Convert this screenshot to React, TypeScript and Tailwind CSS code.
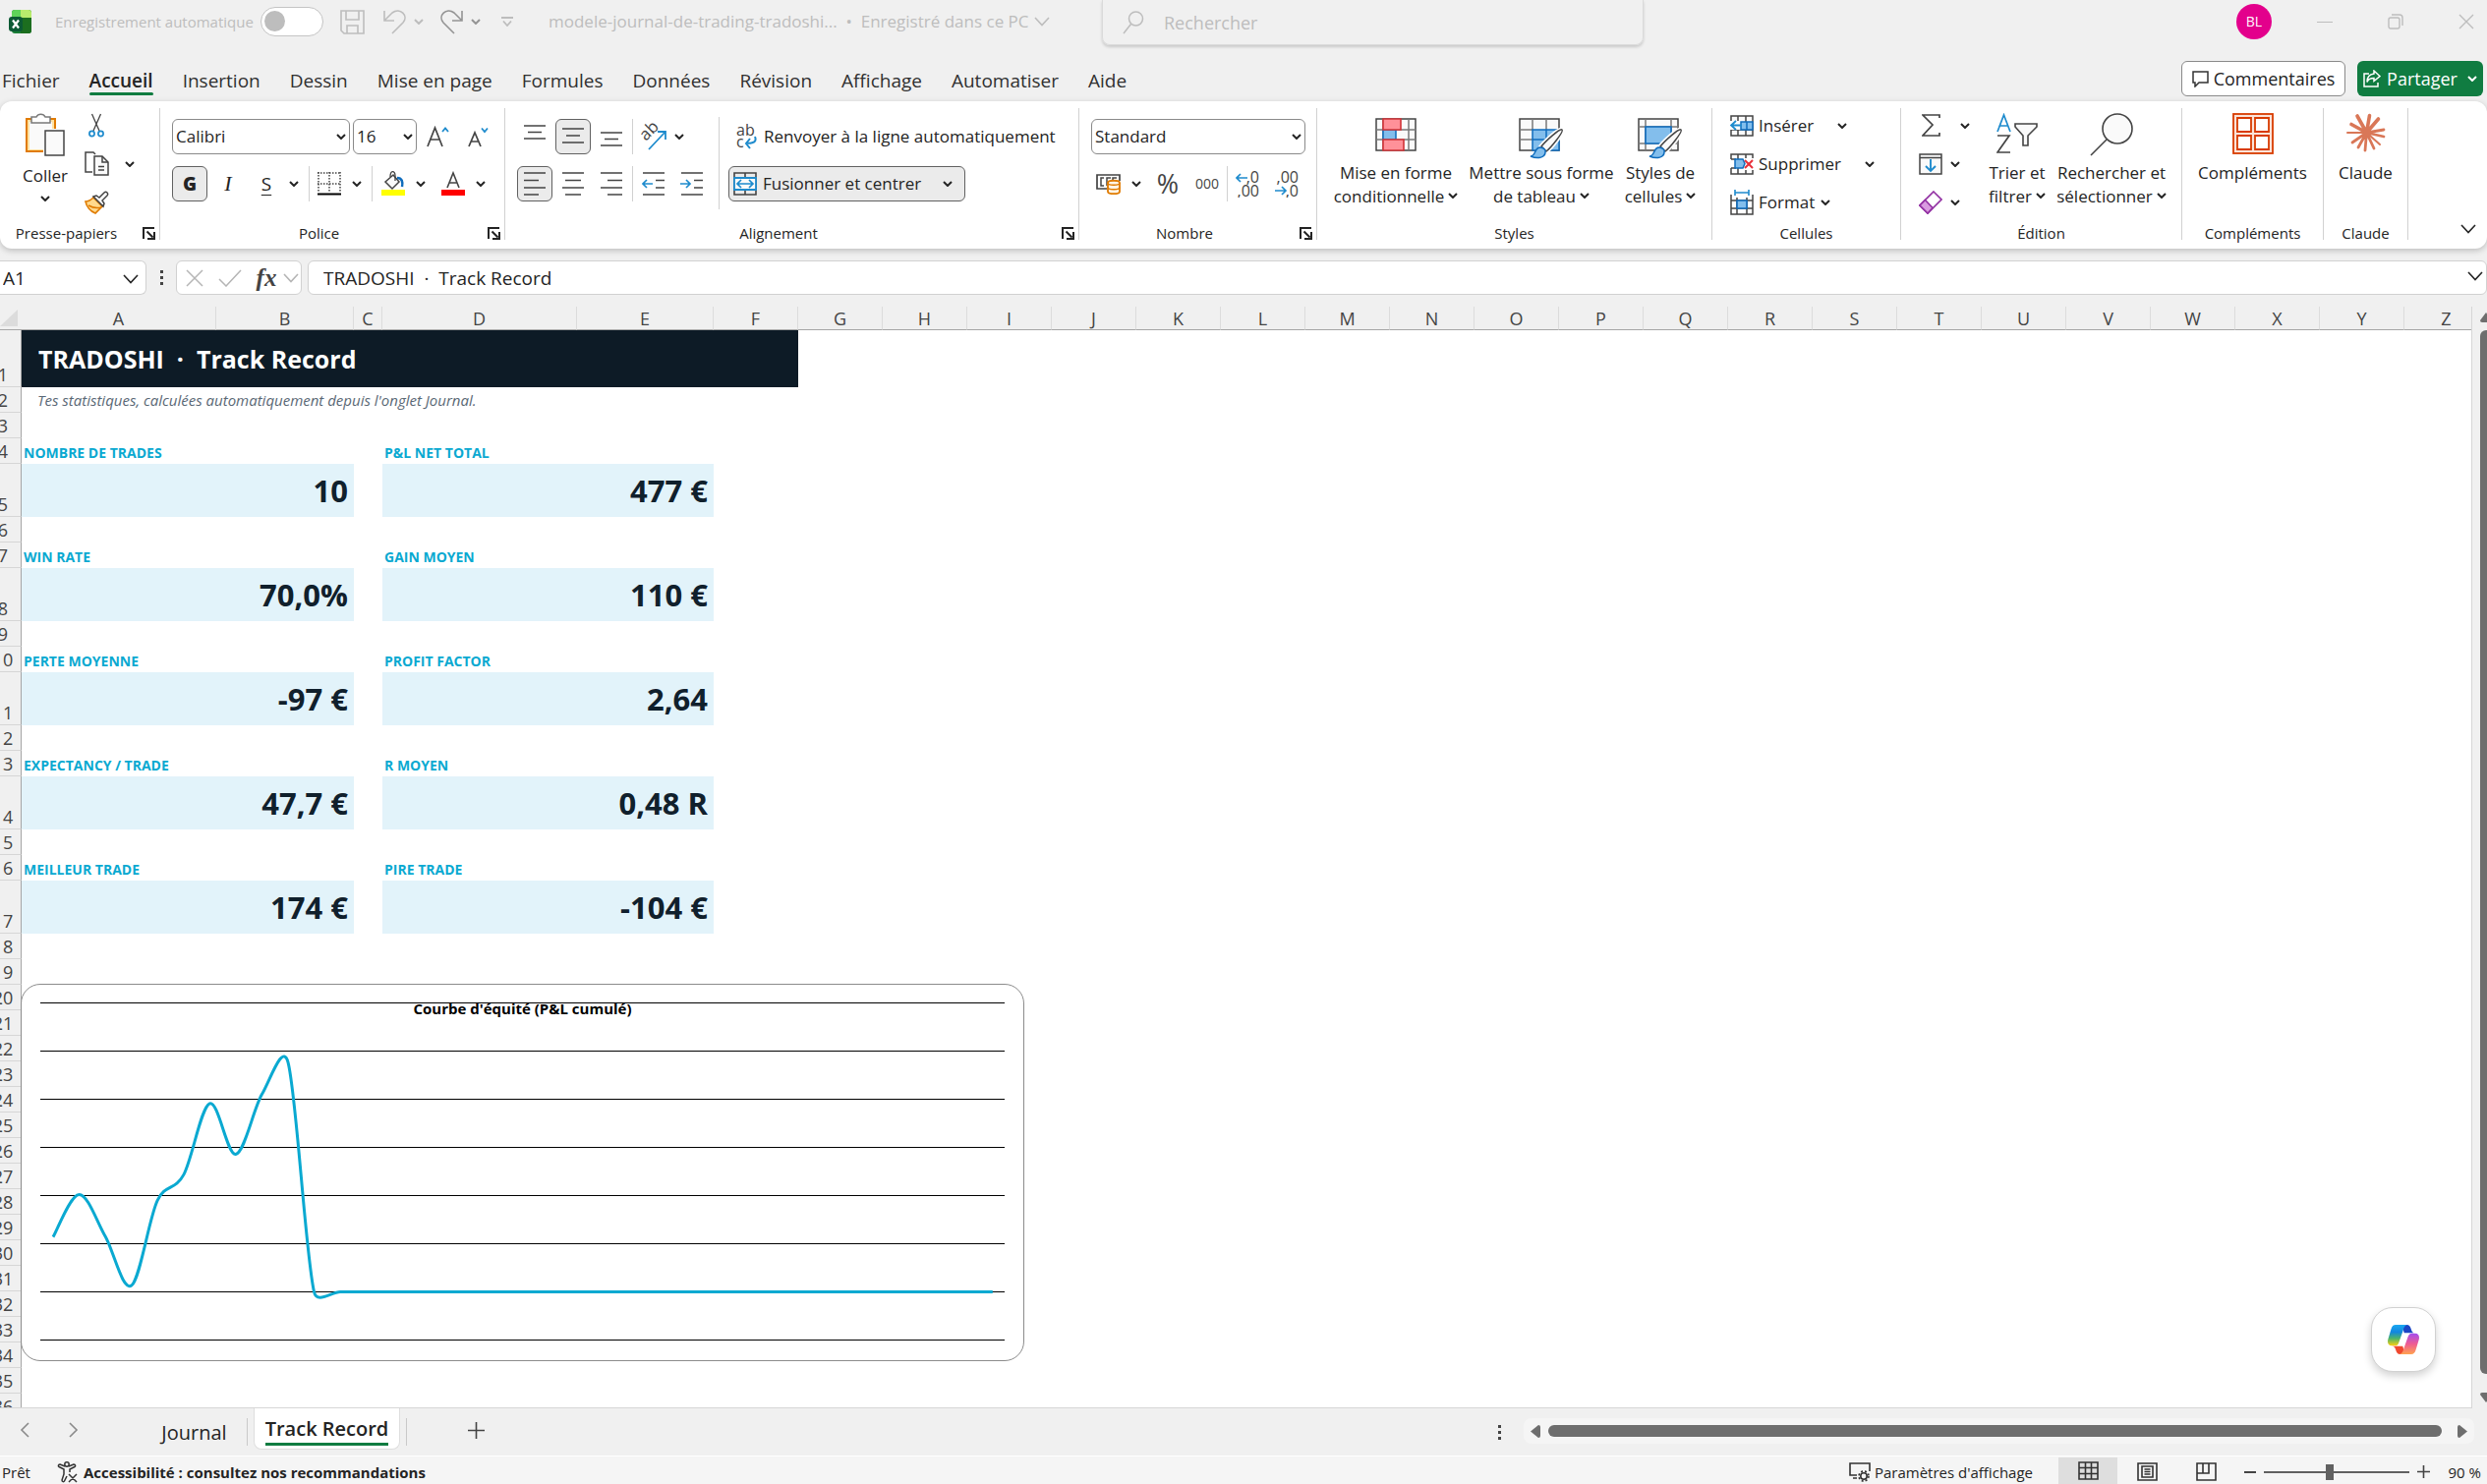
import React from "react";

type Kpi = { label: string; value: string };

const MENU = [
  "Fichier",
  "Accueil",
  "Insertion",
  "Dessin",
  "Mise en page",
  "Formules",
  "Données",
  "Révision",
  "Affichage",
  "Automatiser",
  "Aide",
];

const COLUMNS = "ABCDEFGHIJKLMNOPQRSTUVWXYZ".split("");
const COLUMN_WIDTHS: Record<string, number> = { A: 198, B: 140, C: 29, D: 198, E: 139 };

const KPIS: [Kpi, Kpi][] = [
  [
    { label: "NOMBRE DE TRADES", value: "10" },
    { label: "P&L NET TOTAL", value: "477 €" },
  ],
  [
    { label: "WIN RATE", value: "70,0%" },
    { label: "GAIN MOYEN", value: "110 €" },
  ],
  [
    { label: "PERTE MOYENNE", value: "-97 €" },
    { label: "PROFIT FACTOR", value: "2,64" },
  ],
  [
    { label: "EXPECTANCY / TRADE", value: "47,7 €" },
    { label: "R MOYEN", value: "0,48 R" },
  ],
  [
    { label: "MEILLEUR TRADE", value: "174 €" },
    { label: "PIRE TRADE", value: "-104 €" },
  ],
];

// cumulative P&L, the unused journal rows stay at zero
const EQUITY = [114, 202, 115, 13, 190, 243, 391, 286, 410, 477, ...Array(27).fill(0)];

// smoothed line: control handles never reach past half of the segment
function smoothPath(values: number[]) {
  const pts = values.map((v, i) => [32 + i * 26.55, 312.5 - v * 0.49]);
  const handle = (i: number, dir: number, half: number) => {
    const prev = pts[Math.max(i - 1, 0)];
    const next = pts[Math.min(i + 1, pts.length - 1)];
    const dx = next[0] - prev[0];
    const dy = next[1] - prev[1];
    const len = Math.hypot(dx, dy);
    const k = (Math.min(len / 6, half) / len) * dir;
    return `${(pts[i][0] + dx * k).toFixed(1)} ${(pts[i][1] + dy * k).toFixed(1)}`;
  };
  let d = `M${pts[0][0]} ${pts[0][1]}`;
  for (let i = 0; i < pts.length - 1; i++) {
    const half = Math.hypot(pts[i + 1][0] - pts[i][0], pts[i + 1][1] - pts[i][1]) / 2;
    d += ` C${handle(i, 1, half)} ${handle(i + 1, -1, half)} ${pts[i + 1][0].toFixed(1)} ${pts[i + 1][1].toFixed(1)}`;
  }
  return d;
}

/* ---------- small pieces ---------- */

const Chevron = ({ className = "" }: { className?: string }) => (
  <svg width="10" height="6" viewBox="0 0 10 6" fill="none" stroke="currentColor" strokeWidth="2" className={`inline-block shrink-0 ${className}`}>
    <path d="M1 1l4 4 4-4" />
  </svg>
);

const WideChevron = ({ className = "" }: { className?: string }) => (
  <svg width="16" height="10" viewBox="0 0 16 10" fill="none" stroke="currentColor" strokeWidth="1.6" className={`shrink-0 ${className}`}>
    <path d="M1 1l7 7.500 7-7.500" />
  </svg>
);

interface ToolProps {
  label: string;
  active?: boolean;
  className?: string;
  children: React.ReactNode;
}

const Tool: React.FC<ToolProps> = ({ label, active, className = "w-9", children }) => (
  <button
    aria-label={label}
    className={`h-9 shrink-0 flex items-center justify-center rounded-md border ${
      active ? "bg-[#ebebeb] border-[#616161]" : "border-transparent"
    } ${className}`}
  >
    {children}
  </button>
);

const More = ({ label, className = "w-5" }: { label: string; className?: string }) => (
  <button aria-label={label} className={`h-9 shrink-0 flex items-center justify-center ${className}`}>
    <Chevron />
  </button>
);

const Separator = () => <div className="w-px h-9 bg-[#d1d1d1] shrink-0" />;

interface GroupProps {
  title: string;
  className: string;
  launcher?: boolean;
  children: React.ReactNode;
}

const Group: React.FC<GroupProps> = ({ title, className, launcher, children }) => (
  <section className={`h-[134px] shrink-0 flex flex-col border-r border-[#d1d1d1] ${className}`}>
    <div className="flex-1 min-h-0">{children}</div>
    <div className="h-3.5 flex items-center">
      <span className={`flex-1 text-center text-[15px] leading-3.5 whitespace-nowrap ${launcher ? "pr-2.5" : ""}`}>{title}</span>
      {launcher && (
        <button aria-label={`Paramètres ${title}`} className="mr-1 shrink-0">
          <svg width="13" height="13" viewBox="0 0 13 13" fill="none" stroke="#242424" strokeWidth="2">
            <path d="M1 12V1h11M4.500 4.500l6 6M12 5v7H5" />
          </svg>
        </button>
      )}
    </div>
  </section>
);

interface ComboProps {
  id: string;
  label: string;
  value: string;
  className: string;
}

const Combo: React.FC<ComboProps> = ({ id, label, value, className }) => (
  <div className={`relative ${className}`}>
    <label htmlFor={id} className="sr-only">
      {label}
    </label>
    <select id={id} className="w-full h-9 appearance-none rounded-md border border-[#8a8a8a] bg-white pl-[3px] text-[17px] leading-6">
      <option>{value}</option>
    </select>
    <Chevron className="absolute right-1 top-[15px] pointer-events-none" />
  </div>
);

interface BigButtonProps {
  lines: string[];
  menu?: boolean;
  className: string;
  children: React.ReactNode;
}

const BigButton: React.FC<BigButtonProps> = ({ lines, menu, className, children }) => (
  <button className={`shrink-0 flex flex-col items-center text-[17px] leading-6 whitespace-nowrap ${className}`}>
    <span className="h-[54px] flex items-start justify-center pt-[5px]">{children}</span>
    {lines.map((line, i) => (
      <span key={line}>
        {line}
        {menu && i === lines.length - 1 && <Chevron className="ml-1 mb-1" />}
      </span>
    ))}
  </button>
);

/* ---------- icons ---------- */

const ExcelLogo = () => (
  <svg width="24" height="26" viewBox="0 0 24 26" className="shrink-0">
    <rect x="3" y="1" width="20" height="24" rx="3" fill="#1a7f37" />
    <path d="M3 9V4a3 3 0 0 1 3-3h7v8z" fill="#5fd35a" />
    <path d="M12 1h8a3 3 0 0 1 3 3v5H12z" fill="#b8ec6c" />
    <path d="M12 9h11v13a3 3 0 0 1-3 3h-8z" fill="#1c6e1f" />
    <rect x="0" y="8" width="14" height="15" rx="3" fill="#0c5a34" />
    <path d="M4 11.500l6 8M10 11.500l-6 8" stroke="#fff" strokeWidth="2.200" />
  </svg>
);

const PasteIcon = () => (
  <svg width="42" height="46" viewBox="0 0 42 46" fill="none">
    <path d="M2 7h29v33H2z" fill="#ffe1a1" stroke="#e07b00" strokeWidth="2" />
    <path d="M5 10h23v28H5z" fill="#fafafa" />
    <path d="M7 11V5h5a5 5 0 0 1 9 0h5v6z" fill="#fff" stroke="#7a7a7a" strokeWidth="1.500" />
    <rect x="19" y="17" width="23" height="29" fill="#fff" />
    <rect x="21" y="19" width="19" height="25" fill="#fafafa" stroke="#444" strokeWidth="1.500" />
  </svg>
);

const CutIcon = () => (
  <svg width="16" height="25" viewBox="0 0 16 25" fill="none">
    <path d="M3.500 1L11 18M12.500 1L5 18" stroke="#444" strokeWidth="1.300" />
    <circle cx="3.500" cy="21" r="2.600" stroke="#1e8bcd" strokeWidth="1.700" />
    <circle cx="12.500" cy="21" r="2.600" stroke="#1e8bcd" strokeWidth="1.700" />
  </svg>
);

const CopyIcon = () => (
  <svg width="25" height="25" viewBox="0 0 25 25" fill="none" stroke="#444" strokeWidth="1.500">
    <path d="M8 21H1V1h8l2 2" />
    <path d="M10 5h8l6 6v13H10z" fill="#fafafa" />
    <path d="M18 5v6h6M14 15.500h6M14 19h6" />
  </svg>
);

const BrushIcon = () => (
  <svg width="25" height="24" viewBox="0 0 25 24" fill="none">
    <path d="M9 7C6 10 4 11 1 11c1 5 5 10 10 12l7-7z" fill="#ffd98c" stroke="#e07b00" strokeWidth="1.600" />
    <path d="M4 15c5 3 9 3 13 2" stroke="#e07b00" strokeWidth="1.500" />
    <path d="M9 6l3-1 3 2 5-5c2-2 5 1 3 3l-5 5 2 3-1 3z" fill="#fff" stroke="#444" strokeWidth="1.500" />
  </svg>
);

const BordersIcon = () => (
  <svg width="24" height="24" viewBox="0 0 24 24" fill="none" stroke="#444">
    <path d="M0 1h24M0 12h24" strokeWidth="1.500" strokeDasharray="1.500 1.500" />
    <path d="M1 0v21M12 0v21M23 0v21" strokeWidth="1.500" strokeDasharray="1.500 1.500" />
    <path d="M0 22.500h24" stroke="#000" strokeWidth="2" />
  </svg>
);

const FillIcon = () => (
  <svg width="24" height="26" viewBox="0 0 24 26" fill="none">
    <path d="M4 11l8-7 6 7-7 7z" fill="#fafafa" stroke="#444" strokeWidth="1.500" />
    <path d="M9 6c0-7 5-7 5-1v5" stroke="#444" strokeWidth="1.300" />
    <path d="M16 7c5 0 6 4 5 9" stroke="#0f6cbd" strokeWidth="2.500" />
    <path d="M0 19h24v6H0z" fill="#ff0" />
  </svg>
);

const FontColorIcon = () => (
  <svg width="24" height="26" viewBox="0 0 24 26" fill="none">
    <path d="M6 17l6-15 6 15M8 12h8" stroke="#444" strokeWidth="1.600" />
    <path d="M0 19h24v6H0z" fill="#f00" />
  </svg>
);

const FontSizeIcon = ({ up }: { up?: boolean }) => (
  <svg width="24" height="22" viewBox="0 0 24 22" fill="none">
    <path d={up ? "M1 21L8.500 2 16 21M4 14h9" : "M3 21L9 7l6 14M5.500 16h7"} stroke="#444" strokeWidth="1.700" />
    <path d={up ? "M16 6l3-3.500L22 6" : "M16 2.500L19 6l3-3.500"} stroke="#1e8bcd" strokeWidth="1.800" />
  </svg>
);

const LINE_SHAPES = {
  top: "M1 2h22M5 8.500h14M1 15h22",
  middle: "M1 5h22M5 12h14M1 19h22",
  bottom: "M1 9h22M5 15.500h14M1 22h22",
  left: "M1 2h22M1 9.500h15M1 17h22M1 24h15",
  center: "M1 2h22M4 9.500h16M1 17h22M4 24h16",
  right: "M1 2h22M8 9.500h15M1 17h22M8 24h15",
};

const LinesIcon = ({ kind }: { kind: keyof typeof LINE_SHAPES }) => (
  <svg width="24" height="26" viewBox="0 0 24 26" stroke="#444" strokeWidth="1.700">
    <path d={LINE_SHAPES[kind]} />
  </svg>
);

const IndentIcon = ({ more }: { more?: boolean }) => (
  <svg width="24" height="26" viewBox="0 0 24 26" fill="none" stroke="#444" strokeWidth="1.700">
    <path d="M1 2h22M14 9.500h9M14 17h9M1 24h22" />
    <path d={more ? "M0 13h10M6 9l4 4-4 4" : "M11 13H1M5 9l-4 4 4 4"} stroke="#1e8bcd" />
  </svg>
);

const OrientationIcon = () => (
  <svg width="28" height="28" viewBox="0 0 28 28" fill="none">
    <text x="0" y="0" transform="translate(6 19) rotate(-45)" fontSize="17" fill="#444">
      ab
    </text>
    <path d="M9 27L25 10M18 9h8v8" stroke="#1e8bcd" strokeWidth="1.800" />
  </svg>
);

const WrapIcon = () => (
  <svg width="22" height="26" viewBox="0 0 22 26" fill="none">
    <text x="0" y="12" fontSize="16" fill="#444">
      ab
    </text>
    <text x="0" y="24" fontSize="16" fill="#444">
      c
    </text>
    <path d="M19 13c2 5-1 7-9 7M14 15l-4 5 4 5" stroke="#1e8bcd" strokeWidth="2" />
  </svg>
);

const MergeIcon = () => (
  <svg width="24" height="24" viewBox="0 0 24 24" fill="none">
    <path d="M1 1h22v22H1zM12 1v4M12 19v4" stroke="#444" strokeWidth="1.600" />
    <path d="M1 6h22v12H1z" fill="#fafafa" stroke="#1e8bcd" strokeWidth="1.800" />
    <path d="M4 12h16M8 8l-4 4 4 4M16 8l4 4-4 4" stroke="#1e8bcd" strokeWidth="1.700" />
  </svg>
);

const MoneyIcon = () => (
  <svg width="26" height="22" viewBox="0 0 26 22" fill="none">
    <path d="M24 8V2H1v14h10" stroke="#444" strokeWidth="1.700" />
    <path d="M8 5H5v8h3M15 5h-4v8M17 8V5h4" stroke="#444" strokeWidth="1.500" />
    <path d="M12 10c0-3 12-3 12 0v9c0 3-12 3-12 0z" fill="#fff5e5" stroke="#e07b00" strokeWidth="1.800" />
    <path d="M12 10c0 3 12 3 12 0M12 14.500c0 3 12 3 12 0" stroke="#e07b00" strokeWidth="1.500" />
  </svg>
);

const DecimalIcon = ({ more }: { more?: boolean }) => (
  <svg width="24" height="28" viewBox="0 0 24 28" fill="none">
    <text x="24" y="13" textAnchor="end" fontSize="16" fill="#444">
      {more ? ",0" : ",00"}
    </text>
    <text x="24" y="27" textAnchor="end" fontSize="16" fill="#444">
      {more ? ",00" : ",0"}
    </text>
    <path d={more ? "M12 8H1M5 4L1 8l4 4" : "M0 21h11M7 17l4 4-4 4"} stroke="#1e8bcd" strokeWidth="1.700" />
  </svg>
);

const CondFormatIcon = () => (
  <svg width="42" height="34" viewBox="0 0 42 34" fill="#fafafa">
    <path d="M1 1h40v32H1z" stroke="#444" strokeWidth="1.500" />
    <path d="M1 12h40M1 22h40M8 1v32M34 1v32" stroke="#7a7a7a" strokeWidth="1.500" />
    <path d="M8 12h13v10H8z" fill="#83beec" stroke="#0f6cbd" strokeWidth="1.500" />
    <path d="M8 1h18v11H8zM8 22h21v11H8z" fill="#ff9199" stroke="#d13438" strokeWidth="1.600" />
  </svg>
);

const BrushOverlay = () => (
  <>
    <path d="M44 12c2 2-11 18-16 22l-5-5c4-5 19-19 21-17z" fill="#fff" stroke="#fff" strokeWidth="5" />
    <path d="M44 12c2 2-11 18-16 22l-5-5c4-5 19-19 21-17z" fill="#fafafa" stroke="#444" strokeWidth="1.500" />
    <path d="M27 33c1 8-8 9-15 6 5 0 4-8 9-9 3 0 5 1 6 3z" fill="#83beec" stroke="#0f6cbd" strokeWidth="1.500" />
  </>
);

const TableFormatIcon = () => (
  <svg width="46" height="42" viewBox="0 0 46 42" fill="none">
    <path d="M1 1h40v32H1z" fill="#fafafa" stroke="#444" strokeWidth="1.500" />
    <path d="M14 12h27v21H14z" fill="#83beec" />
    <path d="M1 12h13M1 22h13M14 1v11M28 1v11" stroke="#7a7a7a" strokeWidth="1.500" />
    <path d="M14 12h27v21H14zM14 22h27M28 12v21" stroke="#0f6cbd" strokeWidth="1.500" />
    <BrushOverlay />
  </svg>
);

const CellStylesIcon = () => (
  <svg width="46" height="42" viewBox="0 0 46 42" fill="none">
    <path d="M1 1h40v32H1z" fill="#fafafa" stroke="#444" strokeWidth="1.500" />
    <path d="M1 9h40M1 26h40M8 1v32M34 1v32" stroke="#7a7a7a" strokeWidth="1.500" />
    <path d="M8 9h26v17H8z" fill="#83beec" stroke="#0f6cbd" strokeWidth="1.600" />
    <BrushOverlay />
  </svg>
);

const InsertIcon = () => (
  <svg width="24" height="24" viewBox="0 0 24 24" fill="none">
    <path d="M1 2h22v20H1zM1 16h22M8 2v20M16 2v20" fill="#fafafa" stroke="#444" strokeWidth="1.500" />
    <path d="M0 7h14v9H0z" fill="#fff" />
    <path d="M11 8h12v8H11zM17 8v8" fill="#83beec" stroke="#0f6cbd" strokeWidth="1.500" />
    <path d="M12 11.500H1M6 7l-5 4.500L6 16" stroke="#1e8bcd" strokeWidth="1.800" />
  </svg>
);

const DeleteIcon = () => (
  <svg width="24" height="24" viewBox="0 0 24 24" fill="none">
    <path d="M1 7V2h22v4M1 16v6h22v-4M8 2v5M16 2v4M8 16v6M16 18v4M1 7h5M1 16h5" stroke="#444" strokeWidth="1.500" />
    <path d="M5 7h8l2 4.500-2 4.500H5z" fill="#83beec" stroke="#0f6cbd" strokeWidth="1.500" />
    <path d="M15 8l8 8M23 8l-8 8" stroke="#e8303a" strokeWidth="2" />
  </svg>
);

const FormatIcon = () => (
  <svg width="24" height="26" viewBox="0 0 24 26" fill="none">
    <path d="M1 5v20h22V5M1 11h22M1 19h22M7 8v17M17 8v17" stroke="#444" strokeWidth="1.500" />
    <path d="M7 11h10v8H7z" fill="#83beec" stroke="#0f6cbd" strokeWidth="1.600" />
    <path d="M5 3h14M5 0v6M19 0v6" stroke="#1e8bcd" strokeWidth="1.600" />
  </svg>
);

const SigmaIcon = () => (
  <svg width="19" height="23" viewBox="0 0 19 23" fill="none" stroke="#444" strokeWidth="1.700">
    <path d="M18 4V1H1l10 10L1 22h17v-3" />
  </svg>
);

const FillDownIcon = () => (
  <svg width="24" height="22" viewBox="0 0 24 22" fill="none">
    <path d="M1 1h22v20H1zM1 4.500h22" fill="#fafafa" stroke="#444" strokeWidth="1.500" />
    <path d="M12 6v12M7 13l5 5 5-5" stroke="#1e8bcd" strokeWidth="1.900" />
  </svg>
);

const EraserIcon = () => (
  <svg width="24" height="24" viewBox="0 0 24 24" fill="none" stroke="#9332a3" strokeWidth="1.700">
    <path d="M15 1l8 8L9 23l-8-8z" fill="#fff" />
    <path d="M6.500 9.500l7.500 8L9 23l-8-8z" fill="#d99be0" />
  </svg>
);

const SortIcon = () => (
  <svg width="42" height="41" viewBox="0 0 42 41" fill="none">
    <path d="M1 19L7.500 2 14 19M3.500 13h8" stroke="#1e8bcd" strokeWidth="1.700" />
    <path d="M1 23h12L1 40h13" stroke="#444" strokeWidth="1.700" />
    <path d="M19 11h22v3l-9 9v10h-5V23l-8-9z" fill="#fafafa" stroke="#444" strokeWidth="1.600" />
  </svg>
);

const FindIcon = () => (
  <svg width="44" height="44" viewBox="0 0 44 44" stroke="#444" strokeWidth="1.600">
    <circle cx="28" cy="16" r="15" fill="#fafafa" />
    <path d="M17 27L1 43" />
  </svg>
);

const AddinsIcon = () => (
  <svg width="42" height="42" viewBox="0 0 42 42" fill="#fff" stroke="#d83b01">
    <rect x="1" y="1" width="40" height="40" fill="#fbe3d9" strokeWidth="1.800" />
    <path d="M5 5h14v14H5zM23 5h14v14H23zM5 23h14v14H5zM23 23h14v14H23z" strokeWidth="1.800" />
  </svg>
);

const BurstIcon = () => (
  <svg width="40" height="40" viewBox="0 0 40 40" stroke="#d97757" strokeLinecap="round" fill="none">
    <path d="M20.500 20L11 3M20.500 20L23.500 2.500M20.500 20L32.500 6M20.500 20L5 11.500" strokeWidth="3.600" />
    <path d="M20.500 20L38 17M20.500 20L38 24M20.500 20L6 30M20.500 20L12 35M20.500 20L19 38M20.500 20L28 36" strokeWidth="2.800" />
    <path d="M20.500 20L34 32M20.500 20L1 20" strokeWidth="2" />
    <circle cx="21" cy="20" r="4" fill="#d97757" />
  </svg>
);

const CopilotIcon = () => (
  <svg width="32" height="30" viewBox="0 0 96 90">
    <defs>
      <linearGradient id="cool" x1="0" y1="0" x2="0" y2="1">
        <stop offset="0" stopColor="#1aa8f0" />
        <stop offset="0.350" stopColor="#1186e0" />
        <stop offset="0.650" stopColor="#4bb46a" />
        <stop offset="1" stopColor="#ffd00f" />
      </linearGradient>
      <linearGradient id="warm" x1="0" y1="1" x2="0" y2="0">
        <stop offset="0" stopColor="#a34df0" />
        <stop offset="0.500" stopColor="#ee5a93" />
        <stop offset="1" stopColor="#ffa350" />
      </linearGradient>
    </defs>
    <path d="M44 0h14c8 0 11 5 14 15 2 7 5 10 12 10H50z" fill="#1b45c4" />
    <path d="M24 0h38c-9 0-12 7-15 17L34 54c-3 8-6 10-12 10H12C2 64-2 56 1 44l9-30C13 4 17 0 24 0z" fill="url(#cool)" />
    <g transform="rotate(180 48 45)">
      <path d="M44 0h14c8 0 11 5 14 15 2 7 5 10 12 10H50z" fill="#f0482f" />
      <path d="M24 0h38c-9 0-12 7-15 17L34 54c-3 8-6 10-12 10H12C2 64-2 56 1 44l9-30C13 4 17 0 24 0z" fill="url(#warm)" />
    </g>
  </svg>
);

/* ---------- window parts ---------- */

const TitleBar = () => (
  <header className="h-[46px] flex items-start text-[#bdbdbd] text-[17px] leading-6 whitespace-nowrap">
    <div className="h-[44px] w-[1121px] shrink-0 flex items-center pl-[9px]">
      <ExcelLogo />
      <label htmlFor="autosave" className="ml-[23px] w-[209px] text-[15px]">
        Enregistrement automatique
      </label>
      <span className="relative w-16 h-[30px] shrink-0">
        <input
          id="autosave"
          type="checkbox"
          role="switch"
          className="peer appearance-none block w-16 h-[30px] rounded-full border border-[#c4c4c4] bg-white"
        />
        <span className="absolute left-1 top-1 w-[21px] h-[21px] rounded-full bg-[#bdbdbd] pointer-events-none" />
      </span>
      <button aria-label="Enregistrer" className="ml-[17px]">
        <svg width="25" height="25" viewBox="0 0 25 25" fill="none" stroke="currentColor" strokeWidth="1.600">
          <path d="M1 1h23v23H4l-3-3zM6 1v9h13V1M7 24v-8h11v8" />
        </svg>
      </button>
      <button aria-label="Annuler" className="ml-[19px] flex items-center gap-2">
        <svg width="23" height="25" viewBox="0 0 23 25" fill="none" stroke="currentColor" strokeWidth="1.600">
          <path d="M1 1v10h10M1 11L9 3c8-6 17 3 11 10L9 24" />
        </svg>
        <Chevron />
      </button>
      <button aria-label="Rétablir" className="ml-[17px] flex items-center gap-2 text-[#949494]">
        <svg width="23" height="25" viewBox="0 0 23 25" fill="none" stroke="currentColor" strokeWidth="1.600">
          <path d="M22 1v10H12M22 11l-8-8C6-3-3 6 3 13l11 11" />
        </svg>
        <Chevron />
      </button>
      <button aria-label="Personnaliser la barre d'outils" className="ml-[21px]">
        <svg width="12" height="10" viewBox="0 0 12 10" fill="none" stroke="currentColor" strokeWidth="1.800">
          <path d="M0 1h12M2 4.500L6 9l4-4.500" />
        </svg>
      </button>
      <span className="ml-9">modele-journal-de-trading-tradoshi...</span>
      <span className="w-6 text-center">•</span>
      <button className="flex items-center gap-[5px]">
        Enregistré dans ce PC
        <WideChevron />
      </button>
    </div>
    <label className="h-[46px] w-[551px] flex items-center gap-5 pl-[20px] rounded-b-lg border border-t-0 border-[#dadada] shadow-[0_2px_3px_rgba(0,0,0,0.16)]">
      <svg width="22" height="24" viewBox="0 0 22 24" fill="none" stroke="currentColor" strokeWidth="1.500" aria-hidden="true">
        <circle cx="13.500" cy="8" r="7" />
        <path d="M8.500 13.500L1 23" />
      </svg>
      <input
        type="text"
        aria-label="Rechercher"
        placeholder="Rechercher"
        className="flex-1 min-w-0 bg-transparent text-[18px] leading-6 placeholder:text-[#bdbdbd] outline-none"
      />
    </label>
    <div className="ml-auto h-[44px] flex items-center pr-[13px]">
      <button className="w-9 h-9 rounded-full bg-[#e3008c] text-white text-[14px] leading-5">BL</button>
      <button aria-label="Réduire" className="ml-[46px] w-4 h-4 flex items-center">
        <span className="w-4 h-px bg-[#bdbdbd]" />
      </button>
      <button aria-label="Restaurer" className="ml-14">
        <svg width="16" height="16" viewBox="0 0 16 16" fill="none" stroke="currentColor" strokeWidth="1.400">
          <rect x="1" y="4" width="11" height="11" rx="2" />
          <path d="M4 1h8a3 3 0 0 1 3 3v8" />
        </svg>
      </button>
      <button aria-label="Fermer" className="ml-14">
        <svg width="16" height="16" viewBox="0 0 16 16" stroke="currentColor" strokeWidth="1.400">
          <path d="M1 1l14 14M15 1L1 15" />
        </svg>
      </button>
    </div>
  </header>
);

const MenuBar = () => (
  <nav className="h-[57px] flex items-center pl-0.5 pr-1 whitespace-nowrap">
    <div className="flex items-center gap-[30px] text-[19px] leading-6 text-[#303030] pt-[22px]">
      {MENU.map((item) => (
        <a key={item} href="#" className="flex flex-col items-center pb-1">
          <span className={item === "Accueil" ? "font-semibold text-[#242424]" : ""}>{item}</span>
          <span className={`h-[3px] w-full rounded-full ${item === "Accueil" ? "bg-[#107c41]" : ""}`} />
        </a>
      ))}
    </div>
    <div className="ml-auto flex gap-3 pt-[11px] text-[18px] leading-6">
      <button className="h-9 w-[167px] flex items-center justify-center gap-[5px] rounded-md border border-[#8a8a8a] bg-white">
        <svg width="17" height="17" viewBox="0 0 17 17" fill="none" stroke="#333" strokeWidth="1.500">
          <path d="M1 1h15v11H7l-4 4v-4H1z" />
        </svg>
        Commentaires
      </button>
      <button className="h-9 w-32 flex items-center justify-center gap-1.5 rounded-md bg-[#107c41] text-white">
        <svg width="18" height="18" viewBox="0 0 18 18" fill="none" stroke="#fff" strokeWidth="1.500">
          <path d="M6 4H1v13h14v-4M11 1l6 5.500-6 5V8.500c-4 0-6 1-7 4 0-5 3-8 7-8.500z" />
        </svg>
        Partager
        <Chevron className="ml-1" />
      </button>
    </div>
  </nav>
);

const CellMenuItem = ({ label, gap, children }: { label: string; gap: string; children: React.ReactNode }) => (
  <button className={`h-[39px] flex items-center text-[17px] leading-6 ${gap}`}>
    <span className="flex items-center gap-[5px]">
      {children}
      {label}
    </span>
    <Chevron />
  </button>
);

const Ribbon = () => (
  <div className="h-[150px] flex items-start pt-[7px] bg-white rounded-xl shadow-[0_2px_6px_rgba(0,0,0,0.22)] relative z-10">
    <Group title="Presse-papiers" className="w-[163px]" launcher>
      <div className="flex pl-[22px]">
        <button className="w-[48px] flex flex-col items-center text-[17px] leading-6 pt-1">
          <span className="h-[53px] flex items-start">
            <PasteIcon />
          </span>
          Coller
          <Chevron className="mt-2" />
        </button>
        <div className="ml-2.5 -mt-0.5 flex flex-col">
          <button aria-label="Couper" className="h-[39px] w-9 flex items-center justify-center">
            <CutIcon />
          </button>
          <div className="h-[39px] flex items-center">
            <Tool label="Copier">
              <CopyIcon />
            </Tool>
            <More label="Options de copie" className="w-7 pl-1" />
          </div>
          <button aria-label="Reproduire la mise en forme" className="h-[39px] w-9 flex items-center justify-center">
            <BrushIcon />
          </button>
        </div>
      </div>
    </Group>

    <Group title="Police" className="w-[351px]" launcher>
      <div className="flex flex-col gap-3 pt-[11px] pl-3">
        <div className="flex items-center">
          <Combo id="font" label="Police" value="Calibri" className="w-[181px]" />
          <Combo id="size" label="Taille" value="16" className="ml-[3px] w-[65px]" />
          <Tool label="Augmenter la taille" className="ml-1 w-9">
            <FontSizeIcon up />
          </Tool>
          <Tool label="Réduire la taille" className="ml-1 w-9">
            <FontSizeIcon />
          </Tool>
        </div>
        <div className="flex items-center">
          <Tool label="Gras" active>
            <span className="text-[19px] leading-6 font-extrabold">G</span>
          </Tool>
          <Tool label="Italique" className="ml-[3px] w-9">
            <span className="font-['Liberation_Serif',serif] italic text-[22px] leading-6">I</span>
          </Tool>
          <Tool label="Souligné" className="ml-[3px] w-9">
            <span className="text-[19px] leading-6 underline underline-offset-4">S</span>
          </Tool>
          <More label="Options de soulignement" />
          <span className="w-[5px]" />
          <Separator />
          <Tool label="Bordures" className="ml-0.5 w-9">
            <BordersIcon />
          </Tool>
          <More label="Options de bordures" />
          <span className="w-[5px]" />
          <Separator />
          <Tool label="Couleur de remplissage" className="ml-[3px] w-9">
            <FillIcon />
          </Tool>
          <More label="Choix du remplissage" />
          <Tool label="Couleur de police" className="ml-[5px] w-9">
            <FontColorIcon />
          </Tool>
          <More label="Choix de la couleur" />
        </div>
      </div>
    </Group>

    <Group title="Alignement" className="w-[584px]" launcher>
      <div className="flex">
        <div className="flex flex-col gap-3 pt-[11px] pl-3">
          <div className="flex items-center gap-[3px]">
            <Tool label="Aligner en haut">
              <LinesIcon kind="top" />
            </Tool>
            <Tool label="Aligner au centre" active>
              <LinesIcon kind="middle" />
            </Tool>
            <Tool label="Aligner en bas">
              <LinesIcon kind="bottom" />
            </Tool>
            <Separator />
            <Tool label="Orientation">
              <OrientationIcon />
            </Tool>
            <More label="Options d'orientation" className="w-2.5" />
          </div>
          <div className="flex items-center gap-[3px]">
            <Tool label="Aligner à gauche" active>
              <LinesIcon kind="left" />
            </Tool>
            <Tool label="Centrer">
              <LinesIcon kind="center" />
            </Tool>
            <Tool label="Aligner à droite">
              <LinesIcon kind="right" />
            </Tool>
            <Separator />
            <Tool label="Diminuer le retrait">
              <IndentIcon />
            </Tool>
            <Tool label="Augmenter le retrait">
              <IndentIcon more />
            </Tool>
          </div>
        </div>
        <div className="ml-[9px] mt-[9px] w-px h-[94px] bg-[#d1d1d1]" />
        <div className="flex flex-col gap-3 pt-[11px] pl-[9px] text-[17px] leading-6 whitespace-nowrap">
          <button className="h-9 flex items-center gap-1.5 pl-2">
            <WrapIcon />
            Renvoyer à la ligne automatiquement
          </button>
          <button className="h-9 w-[241px] flex items-center gap-1.5 pl-1 pr-3 rounded-md border border-[#616161] bg-[#ebebeb]">
            <MergeIcon />
            Fusionner et centrer
            <Chevron className="ml-auto" />
          </button>
        </div>
      </div>
    </Group>

    <Group title="Nombre" className="w-[242px]" launcher>
      <div className="flex flex-col gap-3 pt-[11px] pl-3">
        <Combo id="number-format" label="Format de nombre" value="Standard" className="w-[218px]" />
        <div className="flex items-center">
          <Tool label="Format monétaire">
            <MoneyIcon />
          </Tool>
          <More label="Devises" />
          <Tool label="Pourcentage" className="ml-1 w-9">
            <span className="text-[27px] leading-8 text-[#444]">%</span>
          </Tool>
          <Tool label="Séparateur de milliers" className="ml-0.5 w-10">
            <span className="text-[14px] leading-5 text-[#444]">000</span>
          </Tool>
          <Separator />
          <Tool label="Ajouter une décimale" className="ml-0.5 w-9">
            <DecimalIcon more />
          </Tool>
          <Tool label="Réduire les décimales" className="ml-1 w-9">
            <DecimalIcon />
          </Tool>
        </div>
      </div>
    </Group>

    <Group title="Styles" className="w-[402px]">
      <div className="flex pl-2">
        <BigButton lines={["Mise en forme", "conditionnelle"]} menu className="w-[144px] [&>span:first-child]:pt-[10px]">
          <CondFormatIcon />
        </BigButton>
        <BigButton lines={["Mettre sous forme", "de tableau"]} menu className="w-[152px] [&>span:first-child]:pt-[10px]">
          <TableFormatIcon />
        </BigButton>
        <BigButton lines={["Styles de", "cellules"]} menu className="w-[90px] [&>span:first-child]:pt-[10px]">
          <CellStylesIcon />
        </BigButton>
      </div>
    </Group>

    <Group title="Cellules" className="w-[192px]">
      <div className="flex flex-col items-start pl-[18px] -mt-0.5">
        <CellMenuItem label="Insérer" gap="gap-6">
          <InsertIcon />
        </CellMenuItem>
        <CellMenuItem label="Supprimer" gap="gap-6">
          <DeleteIcon />
        </CellMenuItem>
        <CellMenuItem label="Format" gap="gap-1.5">
          <FormatIcon />
        </CellMenuItem>
      </div>
    </Group>

    <Group title="Édition" className="w-[286px]">
      <div className="flex pl-[18px]">
        <div className="w-[60px] flex flex-col -mt-0.5">
          <button aria-label="Somme automatique" className="h-[39px] flex items-center gap-5 pl-[3px]">
            <SigmaIcon />
            <Chevron />
          </button>
          <button aria-label="Recopier" className="h-[39px] flex items-center gap-2">
            <FillDownIcon />
            <Chevron />
          </button>
          <button aria-label="Effacer" className="h-[39px] flex items-center gap-2">
            <EraserIcon />
            <Chevron />
          </button>
        </div>
        <BigButton lines={["Trier et", "filtrer"]} menu className="w-20">
          <SortIcon />
        </BigButton>
        <BigButton lines={["Rechercher et", "sélectionner"]} menu className="w-28">
          <FindIcon />
        </BigButton>
      </div>
    </Group>

    <Group title="Compléments" className="w-[144px]">
      <BigButton lines={["Compléments"]} className="w-full">
        <AddinsIcon />
      </BigButton>
    </Group>

    <Group title="Claude" className="w-[86px]">
      <BigButton lines={["Claude"]} className="w-full">
        <BurstIcon />
      </BigButton>
    </Group>

    <button aria-label="Réduire le ruban" className="ml-auto mr-[11px] mt-[118px]">
      <WideChevron />
    </button>
  </div>
);

const FormulaBar = () => (
  <div className="h-[59px] flex items-center text-[19px] leading-6">
    <div className="relative w-[149px]">
      <input
        aria-label="Zone Nom"
        defaultValue="A1"
        className="w-full h-[35px] pl-[3px] rounded-r-md border border-l-0 border-[#d1d1d1] bg-white outline-none"
      />
      <WideChevron className="absolute right-2 top-[14px]" />
    </div>
    <div className="w-[30px] flex flex-col items-center gap-[3px]">
      <span className="w-[3px] h-[3px] bg-[#444]" />
      <span className="w-[3px] h-[3px] bg-[#444]" />
      <span className="w-[3px] h-[3px] bg-[#444]" />
    </div>
    <div className="w-[128px] h-[35px] flex items-center rounded-md border border-[#d1d1d1] bg-white pl-[9px] text-[#b5b5b5]">
      <button aria-label="Annuler la saisie">
        <svg width="18" height="18" viewBox="0 0 18 18" stroke="currentColor" strokeWidth="1.500">
          <path d="M1 1l16 16M17 1L1 17" />
        </svg>
      </button>
      <button aria-label="Valider" className="ml-[15px]">
        <svg width="24" height="18" viewBox="0 0 24 18" fill="none" stroke="currentColor" strokeWidth="1.500">
          <path d="M1 10l7 7L23 1" />
        </svg>
      </button>
      <button
        aria-label="Insérer une fonction"
        className="ml-[14px] w-[22px] font-['Liberation_Serif',serif] italic font-bold text-[25px] leading-7 text-[#444]"
      >
        fx
      </button>
      <WideChevron className="ml-1.5" />
    </div>
    <div className="relative ml-[6px] flex-1">
      <input
        aria-label="Barre de formule"
        defaultValue="TRADOSHI  ·  Track Record"
        className="w-full h-[35px] pl-[15px] rounded-md border border-[#d1d1d1] bg-white outline-none"
      />
      <WideChevron className="absolute right-1 top-[11px]" />
    </div>
  </div>
);

const KpiCells = ({ kpis, kind }: { kpis: [Kpi, Kpi]; kind: "label" | "value" }) => (
  <>
    {kpis.map((kpi, i) => (
      <React.Fragment key={kpi.label}>
        {kind === "label" ? (
          <td colSpan={2} className="align-bottom pl-[2px] pb-px text-[14px] leading-5 font-bold text-[#0aa9d1]">
            {kpi.label}
          </td>
        ) : (
          <td colSpan={2} className="bg-[#e2f3fa] text-right pr-1.5 text-[31px] leading-10 font-bold text-[#10202c]">
            {kpi.value}
          </td>
        )}
        <td colSpan={i === 0 ? 1 : 21} />
      </React.Fragment>
    ))}
  </>
);

const SheetRow = ({ n }: { n: number }) => {
  const inKpis = n >= 4 && n <= 17;
  const kpis = inKpis ? KPIS[Math.floor((n - 4) / 3)] : null;
  const part = (n - 4) % 3;
  const height = n === 1 ? "h-[58px]" : kpis && part === 1 ? "h-[54px]" : "h-[26px]";

  return (
    <tr className={height}>
      <th scope="row" className="p-0 align-bottom font-normal bg-[#f0f0f0] border-r border-b border-r-[#a6a6a6] border-b-[#d6d6d6]">
        <div className="w-9 -ml-[15px] text-center text-[18px] leading-6 text-[#444]">{n}</div>
      </th>
      {n === 1 && (
        <>
          <td colSpan={6} className="bg-[#0d1b26] text-white pl-[17px] text-[25px] leading-8 font-bold whitespace-pre">
            {"TRADOSHI  ·  Track Record"}
          </td>
          <td colSpan={20} />
        </>
      )}
      {n === 2 && (
        <td colSpan={26} className="p-0 pl-4 text-[15px] leading-5 italic text-[#5a6875]">
          Tes statistiques, calculées automatiquement depuis l'onglet Journal.
        </td>
      )}
      {kpis && part === 0 && <KpiCells kpis={kpis} kind="label" />}
      {kpis && part === 1 && <KpiCells kpis={kpis} kind="value" />}
      {n > 2 && !(kpis && part < 2) && <td colSpan={26} />}
    </tr>
  );
};

const EquityChart = () => (
  <figure className="absolute left-[21px] top-[689px] w-[1021px] h-[384px] rounded-[20px] border border-[#8c8c8c] bg-white overflow-hidden">
    <svg width="1019" height="382" viewBox="0 0 1019 382" className="absolute inset-0" fill="none">
      {[18, 67, 116, 165, 214, 263, 312, 361].map((y) => (
        <path key={y} d={`M19 ${y + 0.5}H1000`} stroke="#000" />
      ))}
      <path d={smoothPath(EQUITY)} stroke="#0aa9d1" strokeWidth="3" strokeLinejoin="round" />
    </svg>
    <figcaption className="relative pt-[14px] text-center text-[15px] leading-5 font-bold text-black">
      Courbe d'équité (P&L cumulé)
    </figcaption>
  </figure>
);

const Sheet = () => (
  <div className="flex-1 min-h-0 flex">
    <div className="relative flex-1 min-w-0 overflow-hidden bg-white border-r border-b border-[#d6d6d6]">
      <table className="table-fixed w-[2532px] border-separate border-spacing-0">
        <colgroup>
          <col className="w-[22px]" />
          {COLUMNS.map((c) => (
            <col key={c} style={{ width: COLUMN_WIDTHS[c] ?? 86 }} />
          ))}
        </colgroup>
        <thead>
          <tr className="h-6 bg-[#f0f0f0]">
            <td className="p-0 border-b border-[#a6a6a6]">
              <svg width="19" height="18" viewBox="0 0 19 18">
                <path d="M18 0v17H0z" fill="#dcdcdc" />
              </svg>
            </td>
            {COLUMNS.map((c) => (
              <th
                key={c}
                scope="col"
                className="p-0 font-normal text-[18px] leading-5 text-[#444] border-b border-r border-b-[#a6a6a6] border-r-[#dcdcdc]"
              >
                {c}
              </th>
            ))}
          </tr>
        </thead>
        <tbody>
          {Array.from({ length: 36 }, (_, i) => (
            <SheetRow key={i} n={i + 1} />
          ))}
        </tbody>
      </table>
      <EquityChart />
      <button
        aria-label="Copilot"
        className="absolute right-9 bottom-9 w-[66px] h-[66px] flex items-center justify-center rounded-[22px] border border-[#d1d1d1] bg-white shadow-[0_4px_8px_rgba(0,0,0,0.18)]"
      >
        <CopilotIcon />
      </button>
    </div>
    <div className="w-[15px] pl-2 flex flex-col justify-between overflow-hidden text-[#6e6e6e] py-1.5">
      <svg width="12" height="10" viewBox="0 0 12 10" className="shrink-0">
        <path d="M6 0l6 8q0 2-2 2H2q-2 0-2-2z" fill="currentColor" />
      </svg>
      <div className="flex-1 mt-2 mb-[19px] w-3 rounded-full bg-[#6e6e6e]" />
      <svg width="12" height="10" viewBox="0 0 12 10" className="shrink-0">
        <path d="M6 10L0 2q0-2 2-2h8q2 0 2 2z" fill="currentColor" />
      </svg>
    </div>
  </div>
);

const SheetTabs = () => (
  <div className="h-[48px] flex items-start">
    <div className="h-11 flex items-center pl-5 gap-[38px] text-[#8a8a8a]">
      <button aria-label="Feuille précédente">
        <svg width="11" height="16" viewBox="0 0 11 16" fill="none" stroke="currentColor" strokeWidth="1.600">
          <path d="M9 1L2 8l7 7" />
        </svg>
      </button>
      <button aria-label="Feuille suivante">
        <svg width="11" height="16" viewBox="0 0 11 16" fill="none" stroke="currentColor" strokeWidth="1.600">
          <path d="M2 1l7 7-7 7" />
        </svg>
      </button>
    </div>
    <button className="ml-16 w-[107px] h-[49px] text-[20px] leading-7">Journal</button>
    <div className="mt-2.5 w-px h-7 bg-[#c9c9c9]" />
    <button className="-mt-px ml-1.5 w-[149px] h-[43px] pt-2 flex flex-col items-center rounded-b-lg border border-t-0 border-[#dedede] bg-white">
      <span className="text-[20px] leading-7 font-semibold border-b-[3px] border-[#107c41]">Track Record</span>
    </button>
    <div className="ml-1.5 mt-2.5 w-px h-7 bg-[#c9c9c9]" />
    <button aria-label="Nouvelle feuille" className="ml-[62px] mt-[14px]">
      <svg width="17" height="17" viewBox="0 0 17 17" stroke="#444" strokeWidth="1.600">
        <path d="M8.500 0v17M0 8.500h17" />
      </svg>
    </button>
    <div className="ml-auto mt-[17px] flex flex-col gap-[3px]">
      <span className="w-[3px] h-[3px] bg-[#444]" />
      <span className="w-[3px] h-[3px] bg-[#444]" />
      <span className="w-[3px] h-[3px] bg-[#444]" />
    </div>
    <div className="ml-[23px] mr-[13px] mt-2.5 w-[967px] h-[26px] flex items-center gap-2 px-[7px] rounded-lg bg-[#f5f5f5] text-[#6e6e6e]">
      <svg width="10" height="13" viewBox="0 0 10 13">
        <path d="M0 6.500L8 0q2 0 2 2v9q0 2-2 2z" fill="currentColor" />
      </svg>
      <div className="flex-1 mr-2 h-3 rounded-full bg-[#6e6e6e]" />
      <svg width="10" height="13" viewBox="0 0 10 13">
        <path d="M10 6.500L2 0Q0 0 0 2v9q0 2 2 2z" fill="currentColor" />
      </svg>
    </div>
  </div>
);

const StatusBar = () => (
  <footer className="h-[29px] flex items-center border-t border-white bg-[#f5f5f5] text-[15px] leading-5 whitespace-nowrap pt-[3px]">
    <span className="pl-0.5 w-[58px]">Prêt</span>
    <button className="flex items-center gap-1.5 font-bold">
      <svg width="21" height="22" viewBox="0 0 21 22" fill="none" stroke="#333" strokeWidth="1.500">
        <circle cx="10" cy="3" r="2.200" />
        <path d="M8 5L3 3C1 3 1 5 2 5.500L7 8v5l-2 6c0 2 2 2 2.500 1L10 15M12 5l5-2c2 0 2 2 1 2.500L13 8v3M12 13l8 8M20 13l-8 8" />
      </svg>
      Accessibilité : consultez nos recommandations
    </button>
    <button className="ml-auto flex items-center gap-1">
      <svg width="22" height="20" viewBox="0 0 22 20" fill="none" stroke="#333" strokeWidth="1.600">
        <path d="M8 13H1V1h20v8M4 16h4" />
        <circle cx="15" cy="14" r="3.200" />
        <circle cx="15" cy="14" r="5" strokeDasharray="2 2" />
      </svg>
      Paramètres d'affichage
    </button>
    <button aria-label="Normal" className="ml-[26px] w-[60px] h-[28px] -mt-0.5 flex items-center justify-center bg-[#dedede]">
      <svg width="21" height="19" viewBox="0 0 21 19" fill="none" stroke="#333" strokeWidth="1.600">
        <path d="M1 1h19v17H1zM1 6.500h19M1 12.500h19M7.500 1v17M13.500 1v17" />
      </svg>
    </button>
    <button aria-label="Mise en page" className="ml-5">
      <svg width="21" height="19" viewBox="0 0 21 19" fill="none" stroke="#333" strokeWidth="1.600">
        <path d="M1 1h19v17H1zM5 4h11v11H5zM7.500 7h6M7.500 9.500h6M7.500 12h6" />
      </svg>
    </button>
    <button aria-label="Aperçu des sauts de page" className="ml-[39px]">
      <svg width="21" height="19" viewBox="0 0 21 19" fill="none" stroke="#333" strokeWidth="1.600">
        <path d="M1 1h19v17H1zM1 11h12V1M7 1v10" />
      </svg>
    </button>
    <button aria-label="Zoom arrière" className="ml-7 w-3 h-4 flex items-center">
      <span className="w-3 h-0.5 bg-[#444]" />
    </button>
    <input
      type="range"
      aria-label="Zoom"
      min="10"
      max="200"
      defaultValue="95"
      className="ml-2 w-[148px] h-4 appearance-none bg-[linear-gradient(#616161,#616161)] bg-[length:100%_2px] bg-center bg-no-repeat [&::-webkit-slider-thumb]:appearance-none [&::-webkit-slider-thumb]:w-2 [&::-webkit-slider-thumb]:h-4 [&::-webkit-slider-thumb]:bg-[#616161]"
    />
    <button aria-label="Zoom avant" className="ml-2">
      <svg width="13" height="13" viewBox="0 0 13 13" stroke="#444" strokeWidth="1.600">
        <path d="M6.500 0v13M0 6.500h13" />
      </svg>
    </button>
    <span className="w-[58px] text-right pr-1.5">90 %</span>
  </footer>
);

export default function App() {
  return (
    <div className="h-screen flex flex-col overflow-hidden bg-[#f0f0f0] text-[#242424] font-['Open_Sans',sans-serif]">
      <TitleBar />
      <MenuBar />
      <Ribbon />
      <FormulaBar />
      <Sheet />
      <SheetTabs />
      <StatusBar />
    </div>
  );
}
